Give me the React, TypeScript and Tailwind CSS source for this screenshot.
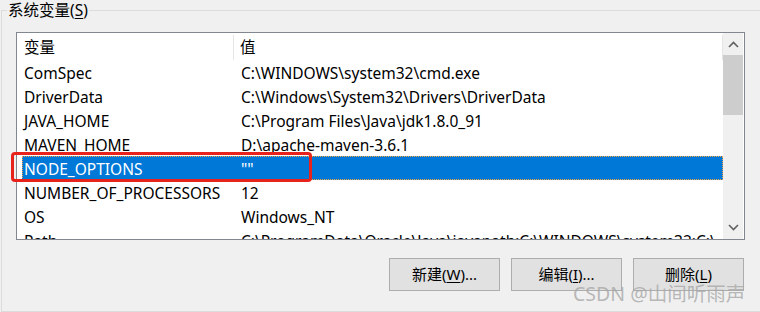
import React from 'react';

const rows: [string, string][] = [
  ['ComSpec', 'C:\\WINDOWS\\system32\\cmd.exe'],
  ['DriverData', 'C:\\Windows\\System32\\Drivers\\DriverData'],
  ['JAVA_HOME', 'C:\\Program Files\\Java\\jdk1.8.0_91'],
  ['MAVEN_HOME', 'D:\\apache-maven-3.6.1'],
  ['NODE_OPTIONS', '""'],
  ['NUMBER_OF_PROCESSORS', '12'],
  ['OS', 'Windows_NT'],
  ['Path', 'C:\\ProgramData\\Oracle\\Java\\javapath;C:\\WINDOWS\\system32;C:\\'],
];

const font = { fontFamily: '"Noto Sans", "Noto Sans CJK SC", sans-serif' };

const Btn = ({ label, hot, tail }: { label: string; hot: string; tail: string }) => (
  <button className="w-[111px] h-[33px] border border-[#adadad] bg-[#e1e1e1] text-[15px] text-black flex items-center justify-center">
    {label}(<span className="underline underline-offset-2">{hot}</span>){tail}
  </button>
);

export default function App() {
  return (
    <div className="relative w-[760px] h-[312px] bg-[#f0f0f0] overflow-hidden text-black" style={font}>
      {/* group box */}
      <div className="absolute left-[1px] top-[10px] w-[800px] h-[302px] border-l border-t border-b border-[#dcdcdc]" />
      <div className="absolute left-[7px] top-0 px-[1px] bg-[#f0f0f0] text-[15.5px] leading-[20px]">
        系统变量(<span className="underline underline-offset-2">S</span>)
      </div>

      <div className="relative pt-[32px] pl-[16px]">
        {/* list view */}
        <div className="w-[729px] h-[208px] border border-[#828790] bg-white flex overflow-hidden">
          <div className="flex-1 flex flex-col">
            <div className="h-[27px] flex text-[15.5px] shrink-0 pt-[2px]">
              <div className="w-[217px] pl-[7px] flex items-center border-r border-[#e5e5e5] h-[25px]">变量</div>
              <div className="flex-1 pl-[6px] flex items-center border-r border-[#e5e5e5]">值</div>
            </div>
            {rows.map(([k, v], i) => {
              const sel = k === 'NODE_OPTIONS';
              return (
                <div
                  key={i}
                  className={
                    'h-[24px] ml-[5px] pt-[3px] flex items-center text-[15.5px] shrink-0 ' +
                    (sel ? 'bg-[#0078d7] text-white outline-1 outline-dotted outline-[#f5a04a] -outline-offset-1' : '')
                  }
                >
                  <div className="w-[212px] pl-[2px] whitespace-nowrap">{k}</div>
                  <div className="flex-1 pl-[7px] whitespace-nowrap overflow-hidden">{v}</div>
                </div>
              );
            })}
          </div>
          {/* scrollbar */}
          <div className="w-[20px] h-full bg-[#f0f0f0] flex flex-col items-center shrink-0 mr-[1px]">
            <div className="h-[22px] w-full flex items-center justify-center">
              <svg width="11" height="7" viewBox="0 0 11 7">
                <path d="M1 6 L5.5 1.5 L10 6" stroke="#606060" strokeWidth="1.6" fill="none" />
              </svg>
            </div>
            <div className="w-full h-[60px] bg-[#cdcdcd]" />
            <div className="flex-1" />
            <div className="h-[24px] w-full flex items-center justify-center">
              <svg width="11" height="7" viewBox="0 0 11 7">
                <path d="M1 1 L5.5 5.5 L10 1" stroke="#606060" strokeWidth="1.6" fill="none" />
              </svg>
            </div>
          </div>
        </div>

        {/* buttons */}
        <div className="flex justify-end gap-[11px] mt-[18px] w-[728px]">
          <Btn label="新建" hot="W" tail="..." />
          <Btn label="编辑" hot="I" tail="..." />
          <Btn label="删除" hot="L" tail="" />
        </div>
      </div>

      {/* red highlight */}
      <div className="absolute left-[11px] top-[152px] w-[301px] h-[30px] border-[3px] border-[#e8231c] rounded-[4px]" />

      {/* watermark */}
      <div className="absolute left-[573px] top-[283px] text-[19.5px] leading-[22px] text-[#a8a8a8]/80 whitespace-nowrap">
        CSDN @山间听雨声
      </div>
    </div>
  );
}
